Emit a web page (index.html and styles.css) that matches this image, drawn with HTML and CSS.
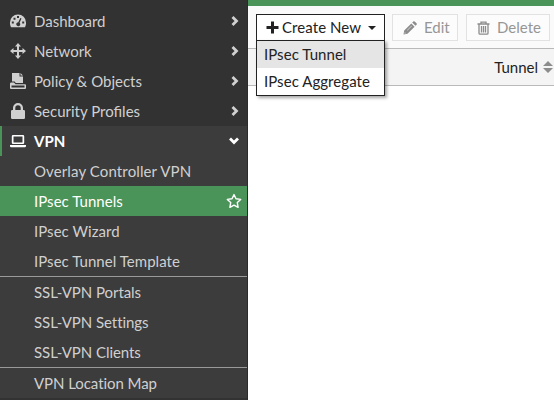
FILE: index.html
```html
<!DOCTYPE html>
<html lang="en">
<head>
<meta charset="utf-8">
<title>IPsec Tunnels</title>
<link rel="stylesheet" href="styles.css">
</head>
<body>
<div class="app">
  <nav class="sidebar">
    <a class="row"><svg class="icon" viewBox="0 0 16 16"><path fill-rule="evenodd" d="M1 14.200A8 8 0 0 1 0 9.500a8 8 0 0 1 16 0 8 8 0 0 1-1 4.700zM1.800 8.500v2h2v-2zM3.500 4.700v2h2v-2zM7 3v2h2V3zM12.200 8.500v2h2v-2zM10.300 5 8.300 9.200a2 2 0 1 0 1.300.500L11.500 5.400z"/></svg><span class="label">Dashboard</span><svg class="chev" viewBox="0 0 8 10"><path d="M1.500 1 5.500 5 1.500 9"/></svg></a>
    <a class="row"><svg class="icon" viewBox="0 0 16 16"><path d="M8 0l3 3.500H9V7h3.500V5L16 8l-3.500 3V9H9v3.500h2L8 16l-3-3.500h2V9H3.500v2L0 8l3.500-3v2H7V3.500H5z"/></svg><span class="label">Network</span><svg class="chev" viewBox="0 0 8 10"><path d="M1.500 1 5.500 5 1.500 9"/></svg></a>
    <a class="row"><svg class="icon" viewBox="0 0 16 16"><path d="M2 0h7.500v3.500H13V10H5.800L4.600 8.500H2zM10.500 0 13 2.500h-2.500z"/><path fill-rule="evenodd" d="M1.200 9.500H4l1.500 1.800H15a1 1 0 0 1 1 1V15a1 1 0 0 1-1 1H1a1 1 0 0 1-1-1v-4.300a1.200 1.200 0 0 1 1.200-1.200zM1.500 12.500v2h13v-2z"/></svg><span class="label">Policy &amp; Objects</span><svg class="chev" viewBox="0 0 8 10"><path d="M1.500 1 5.500 5 1.500 9"/></svg></a>
    <a class="row"><svg class="icon" viewBox="0 0 16 16"><path fill-rule="evenodd" d="M3 7V5a5 5 0 0 1 10 0v2h.800a1.200 1.200 0 0 1 1.200 1.200v6.600a1.200 1.200 0 0 1-1.200 1.200H2.200A1.200 1.200 0 0 1 1 14.800V8.200A1.200 1.200 0 0 1 2.200 7zM5.300 7h5.400V5a2.700 2.700 0 0 0-5.400 0z"/></svg><span class="label">Security Profiles</span><svg class="chev" viewBox="0 0 8 10"><path d="M1.500 1 5.500 5 1.500 9"/></svg></a>
    <section class="group">
      <a class="row row-open"><svg class="icon" viewBox="0 0 16 16"><path fill-rule="evenodd" d="M3 2h10A1.200 1.200 0 0 1 14.200 3.200v6.600a1.200 1.200 0 0 1-1.200 1.200H3a1.200 1.200 0 0 1-1.200-1.200V3.200A1.200 1.200 0 0 1 3 2zM3.500 3.500v6h9v-6zM0 12h16v1a1.200 1.200 0 0 1-1.200 1.200H1.200A1.200 1.200 0 0 1 0 13z"/></svg><span class="label">VPN</span><svg class="chev chev-down" viewBox="0 0 10 8"><path d="M1 1.500 5 5.500 9 1.500"/></svg></a>
      <a class="sub wide">Overlay Controller VPN</a>
      <a class="sub sub-active"><span class="label">IPsec Tunnels</span><svg class="star" viewBox="0 0 16 16"><path d="M8 1.600l2 4.200 4.700.600-3.400 3.200.800 4.700L8 12.100l-4.100 2.200.800-4.700L1.300 6.400 6 5.800z"/></svg></a>
      <a class="sub">IPsec Wizard</a>
      <a class="sub">IPsec Tunnel Template</a>
      <a class="sub tight divided">SSL-VPN Portals</a>
      <a class="sub tight">SSL-VPN Settings</a>
      <a class="sub tight">SSL-VPN Clients</a>
      <a class="sub tight divided">VPN Location Map</a>
    </section>
  </nav>
  <main class="main">
    <div class="toolbar">
      <div class="dropdown">
        <button class="btn create"><svg class="plus" viewBox="0 0 13 13"><path d="M6.500.500v12M.500 6.500h12"/></svg><span>Create New</span><i class="caret"></i></button>
        <div class="menu">
          <a class="item item-hover">IPsec Tunnel</a>
          <a class="item">IPsec Aggregate</a>
        </div>
      </div>
      <button class="btn edit"><svg class="pencil" viewBox="0 0 14 14"><path fill-rule="evenodd" d="M.500 13.500l.700-4L8.300 2.400l3.300 3.300-7.100 7.100zM1.800 11.200l-.200 1.200 1.200-.200zM4 9.200l.400.400 4.500-4.500-.400-.400zM9.200 1.500l1-1a1.100 1.100 0 0 1 1.500 0l1.800 1.800a1.100 1.100 0 0 1 0 1.500l-1 1z"/></svg><span>Edit</span></button>
      <button class="btn delete"><svg class="trash" viewBox="0 0 13 14"><path d="M.500 3h12M4 3V1.200h5V3M2 3v9.200q0 1 1 1h7q1 0 1-1V3M4.500 5v6.500M6.500 5v6.500M8.500 5v6.500"/></svg><span>Delete</span></button>
    </div>
    <div class="thead"><span>Tunnel</span><svg class="sort" viewBox="0 0 10 12"><path d="M5 0l5 5H0zM0 7h10l-5 5z"/></svg></div>
  </main>
</div>
</body>
</html>
```
FILE: styles.css
```css
* { box-sizing: border-box; }
body {
  margin: 0;
  background: #fff;
  font: 15px/30px Lato, "Liberation Sans", sans-serif;
}
.app { display: flex; height: 400px; overflow: hidden; }
svg { flex: none; }
.sidebar {
  width: 248px;
  flex: none;
  padding-top: 6px;
  background: #323232;
  border-right: 1px solid #2b2b2b;
  color: #d0d0d0;
}
.row { display: flex; align-items: center; height: 30px; padding: 0 8px 0 10px; }
.label { flex: 1; }
.icon { width: 16px; height: 16px; margin-right: 8px; fill: #d0d0d0; }
.chev { width: 8px; height: 10px; fill: none; stroke: #d0d0d0; stroke-width: 2.8; }
.group { background: #3c3c3c; }
.row-open { padding-left: 8px; border-left: 2px solid #4a9359; color: #fff; font-weight: 700; }
.row-open .icon { fill: #fff; }
.chev-down { width: 10px; height: 8px; stroke: #fff; }
.sub { display: flex; align-items: center; height: 30px; padding: 0 5px 0 34px; white-space: nowrap; letter-spacing: .04px; }
.wide { letter-spacing: .12px; }
.tight { letter-spacing: -.06px; }
.sub-active { background: #4a9359; color: #fff; }
.star { width: 16px; height: 16px; fill: none; stroke: #fff; stroke-width: 1.4; stroke-linejoin: round; }
.divided { height: 31px; border-top: 1px solid #999; }
.main { flex: 1; border-top: 6px solid #4a9359; }
.toolbar {
  display: flex;
  gap: 7px;
  height: 43px;
  padding: 8px 0 0 8px;
  background: #fafafa;
  border-bottom: 1px solid #b9b9b9;
}
.dropdown { position: relative; width: 129px; }
.btn {
  display: flex;
  align-items: center;
  height: 27px;
  padding: 0 9px;
  background: #fcfcfc;
  border: 1px solid #e2e2e2;
  color: #969696;
  font: inherit;
  line-height: 25px;
  white-space: nowrap;
}
.create { width: 129px; background: #fff; border-color: #222; color: #222; letter-spacing: .08px; }
.plus { width: 13px; height: 13px; margin-right: 3px; stroke: #222; stroke-width: 3; }
.caret { flex: none; margin-left: 7px; border: 4px solid transparent; border-top-color: #222; border-bottom: 0; }
.menu {
  position: absolute;
  top: 26px;
  left: 0;
  z-index: 1;
  width: 129px;
  background: #fff;
  border: 1px solid #222;
  box-shadow: 2px 2px 3px rgba(0, 0, 0, .35);
  color: #222;
  letter-spacing: .05px;
}
.item { display: block; height: 27px; padding-left: 7px; line-height: 27px; }
.item-hover { background: #e5e5e5; }
.edit { width: 66px; }
.delete { width: 84px; margin-left: 1px; }
.pencil { width: 14px; height: 14px; margin: 0 7px 0 1px; fill: #8c8c8c; }
.trash { width: 13px; height: 14px; margin: 0 7px 0 1px; fill: none; stroke: #8c8c8c; stroke-width: 1.3; }
.thead {
  display: flex;
  align-items: center;
  justify-content: flex-end;
  gap: 5px;
  height: 37px;
  padding-right: 1px;
  background: #f4f4f4;
  border-bottom: 1px solid #b9b9b9;
  color: #222;
}
.sort { width: 10px; height: 12px; fill: #8c8c8c; }
```
